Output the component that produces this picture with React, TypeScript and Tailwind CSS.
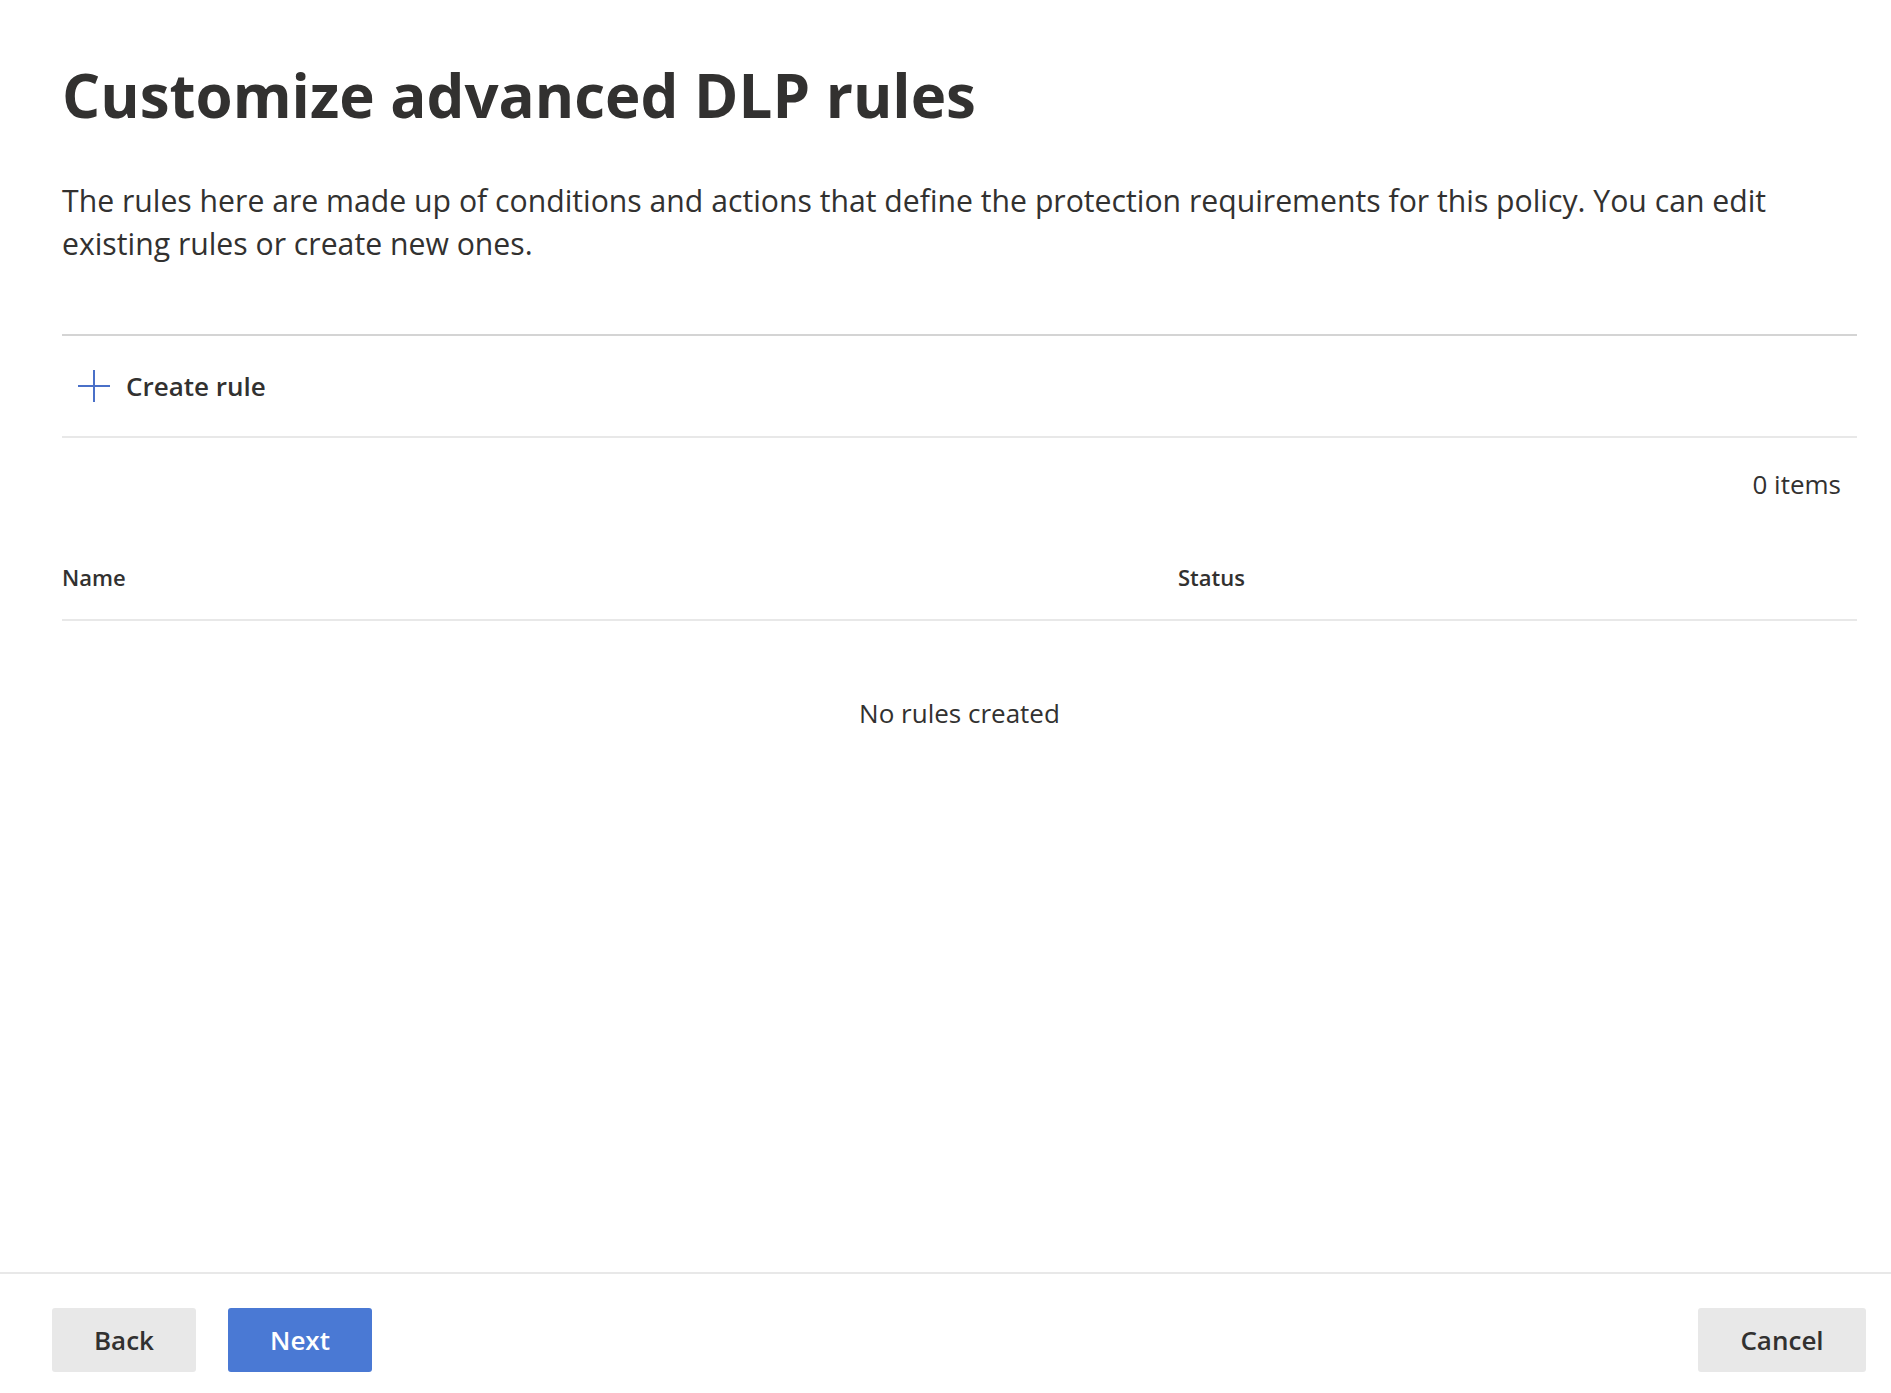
const font = "font-['Open_Sans','Noto_Sans',sans-serif]"

function PlusIcon() {
  return (
    <svg width="32" height="32" viewBox="0 0 32 32" className="shrink-0">
      <path d="M16 0V32M0 16H32" stroke="#4a70c8" strokeWidth="2" />
    </svg>
  )
}

export default function App() {
  return (
    <div className={`${font} min-h-screen flex flex-col bg-white text-[#323130]`}>
      <main className="flex-1 pl-[62px] pr-[34px]">
        <h1 className="mt-[65px] text-[60px] font-bold leading-none">
          Customize advanced DLP rules
        </h1>

        <p className="mt-[54px] max-w-[1760px] text-[30.2px] leading-[43px]">
          The rules here are made up of conditions and actions that define the protection requirements for this policy. You can edit existing rules or create new ones.
        </p>

        <div className="mt-[69px] border-t-2 border-[#d4d4d4]" />

        {/* Command bar */}
        <div className="h-[102px] flex items-center pl-4 gap-4 border-b-2 border-[#e8e8e8]">
          <PlusIcon />
          <span className="text-[26px] font-semibold">Create rule</span>
        </div>

        <div className="h-[95px] flex items-center justify-end pr-4 pb-[2px] text-[26px]">0 items</div>

        {/* Table header */}
        <div className="h-[88px] grid grid-cols-[1116px_1fr] items-center pt-[3px] border-b-2 border-[#e8e8e8] text-[22px] font-semibold">
          <span>Name</span>
          <span>Status</span>
        </div>

        <div className="h-[184px] flex items-center justify-center text-[26px]">No rules created</div>
      </main>

      <footer className="h-[121px] border-t-2 border-[#e8e8e8] flex items-start justify-between pt-[34px] pl-[52px] pr-[25px]">
        <div className="flex gap-8">
          <button className="w-[144px] h-[64px] rounded-[3px] bg-[#e8e8e8] text-[26px] font-semibold">Back</button>
          <button className="w-[144px] h-[64px] rounded-[3px] bg-[#4a79d4] text-white text-[26px] font-semibold">Next</button>
        </div>
        <button className="w-[168px] h-[64px] rounded-[3px] bg-[#e8e8e8] text-[26px] font-semibold">Cancel</button>
      </footer>
    </div>
  )
}
